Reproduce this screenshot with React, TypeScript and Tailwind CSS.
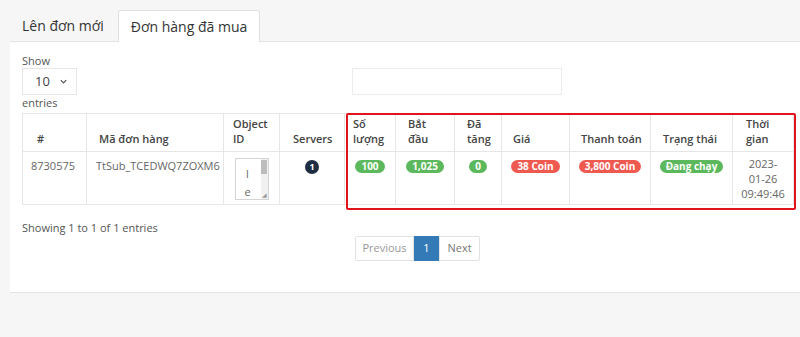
import React from 'react';

const COLS = [64, 137, 56, 65, 51, 59, 47, 68, 81, 82, 61];

function Pill({ children, tone }: { children: React.ReactNode; tone: 'green' | 'red' }) {
  const cls = tone === 'green' ? 'bg-[#5cb85c]' : 'bg-[#ef5a50]';
  return (
    <span className={`inline-block rounded-full px-[6px] text-[10px] font-bold leading-[13px] text-white ${cls}`}>
      {children}
    </span>
  );
}

function ObjectIdBox() {
  return (
    <div className="relative mx-auto h-[42px] w-[34px] border border-[#d4d4d4] bg-white">
      <div className="pr-[8px] pt-[6px] text-center text-[11px] leading-[18px] text-[#666]">
        <div>l</div>
        <div>e</div>
      </div>
      <div className="absolute right-0 top-0 h-full w-[7px] bg-[#f1f1f1]">
        <div className="mx-auto mt-[1px] h-[14px] w-[6px] bg-[#bdbdbd]" />
      </div>
      <div className="absolute bottom-[1px] right-[1px] text-[6px] leading-none text-[#999]">◢</div>
    </div>
  );
}

export default function App() {
  const th = 'border border-[#e6e6e6] align-bottom p-0 pb-[5px] text-left font-semibold leading-[15px] text-[#444]';
  const td = 'border border-[#e6e6e6] align-top p-0 pt-[6px] leading-[16px] text-[#666]';

  return (
    <div
      className="h-[337px] w-[800px] overflow-hidden bg-[#f6f6f6] text-[11px]"
      style={{ fontFamily: '"Open Sans", "Noto Sans", sans-serif' }}
    >
      {/* tabs */}
      <div className="flex h-[41px] items-end pl-[10px]">
        <div className="flex h-[31px] items-center px-[12px] text-[14px] text-[#333]">Lên đơn mới</div>
        <div className="relative -mb-px ml-[2px] flex h-[32px] items-center rounded-t-[3px] border border-b-0 border-[#e0e0e0] bg-white px-[12px] text-[14px] text-[#333]">
          Đơn hàng đã mua
        </div>
      </div>

      {/* panel */}
      <div className="ml-[10px] h-[252px] border-b border-t border-[#e3e3e3] bg-white pl-[12px] pt-[12px]">
        <div className="flex">
          <div className="w-[330px]">
            <div className="leading-[14px] text-[#555]">Show</div>
            <div className="flex h-[27px] w-[55px] items-center justify-between border border-[#e6e6e6] pl-[12px] pr-[8px] text-[13px] text-[#444]">
              <span>10</span>
              <svg width="9" height="9" viewBox="0 0 10 10" fill="none" stroke="#555" strokeWidth="1.4">
                <path d="M2 3.5 L5 6.5 L8 3.5" />
              </svg>
            </div>
            <div className="mt-[1px] leading-[14px] text-[#555]">entries</div>
          </div>
          <div className="mt-[14px] h-[27px] w-[210px] border border-[#ececec]" />
        </div>

        {/* table */}
        <div className="relative mt-[3px] w-[775px]">
          <table className="table-fixed border-collapse text-[11px]" style={{ width: 771 }}>
            <colgroup>
              {COLS.map((w, i) => (
                <col key={i} style={{ width: w }} />
              ))}
            </colgroup>
            <thead>
              <tr style={{ height: 38 }}>
                <th className={`${th} pl-[14px]`}>#</th>
                <th className={`${th} pl-[12px]`}>Mã đơn hàng</th>
                <th className={`${th} pl-[9px]`}>Object<br />ID</th>
                <th className={`${th} pl-[13px]`}>Servers</th>
                <th className={`${th} pl-[8px]`}>Số<br />lượng</th>
                <th className={`${th} pl-[12px]`}>Bắt<br />đầu</th>
                <th className={`${th} pl-[12px]`}>Đã<br />tăng</th>
                <th className={`${th} pl-[11px]`}>Giá</th>
                <th className={`${th} pl-[11px]`}>Thanh toán</th>
                <th className={`${th} pl-[12px]`}>Trạng thái</th>
                <th className={`${th} pl-[13px]`}>Thời<br />gian</th>
              </tr>
            </thead>
            <tbody>
              <tr style={{ height: 53 }}>
                <td className={`${td} pl-[8px]`}>8730575</td>
                <td className={`${td} pl-[9px]`}>TtSub_TCEDWQ7ZOXM6</td>
                <td className={`${td}`}>
                  <ObjectIdBox />
                </td>
                <td className={`${td} text-center`}>
                  <span className="inline-flex h-[14px] w-[14px] items-center justify-center rounded-full bg-[#1e2d42] text-[9px] font-bold text-white">
                    1
                  </span>
                </td>
                <td className={`${td} text-center`}><Pill tone="green">100</Pill></td>
                <td className={`${td} text-center`}><Pill tone="green">1,025</Pill></td>
                <td className={`${td} text-center`}><Pill tone="green">0</Pill></td>
                <td className={`${td} text-center`}><Pill tone="red">38 Coin</Pill></td>
                <td className={`${td} text-center`}><Pill tone="red">3,800 Coin</Pill></td>
                <td className={`${td} text-center`}><Pill tone="green">Đang chạy</Pill></td>
                <td className={`${td} text-center`}>
                  <div className="-mt-[2px] leading-[15px]">
                    2023-<br />01-26<br />09:49:46
                  </div>
                </td>
              </tr>
            </tbody>
          </table>
          <div className="pointer-events-none absolute left-[324px] top-0 h-[97px] w-[450px] rounded-[2px] border-2 border-[#e3131b]" />
        </div>

        <div className="mt-[16px] leading-[14px] text-[#555]">Showing 1 to 1 of 1 entries</div>

        <div className="ml-[333px] mt-[1px] flex h-[25px] w-fit text-[11px]">
          <div className="flex w-[59px] items-center justify-center rounded-l-[2px] border border-[#e2e2e2] text-[#999]">Previous</div>
          <div className="flex w-[25px] items-center justify-center bg-[#337ab7] text-white">1</div>
          <div className="flex w-[41px] items-center justify-center rounded-r-[2px] border border-[#e2e2e2] text-[#777]">Next</div>
        </div>
      </div>
    </div>
  );
}
